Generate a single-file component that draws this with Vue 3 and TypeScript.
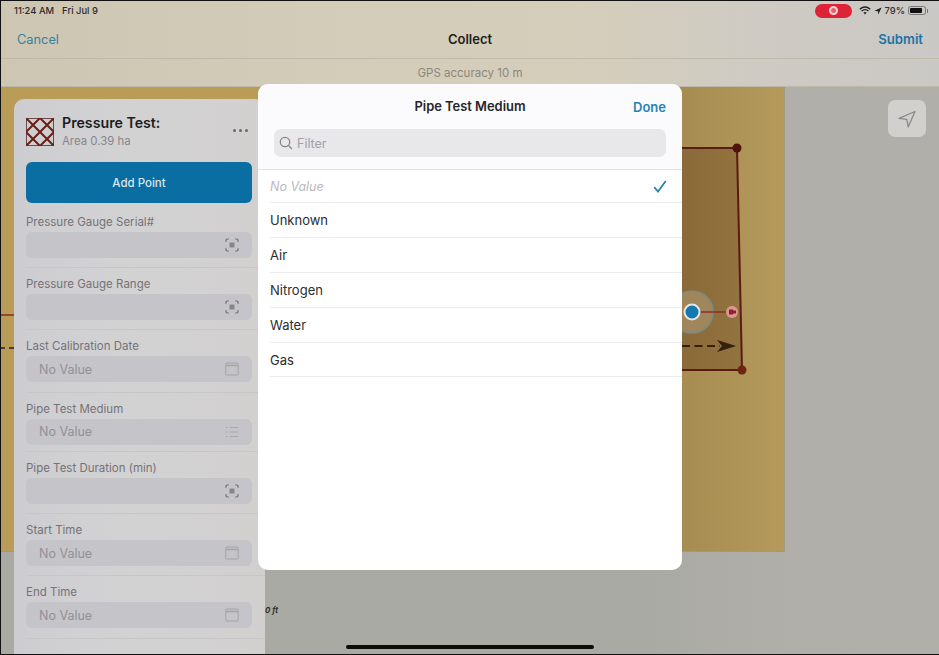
<script setup lang="ts">
type FieldIcon = 'scan' | 'calendar' | 'list';

const fields: { label: string; value: string; icon: FieldIcon; compact?: boolean }[] = [
  { label: 'Pressure Gauge Serial#', value: '', icon: 'scan' },
  { label: 'Pressure Gauge Range', value: '', icon: 'scan' },
  { label: 'Last Calibration Date', value: 'No Value', icon: 'calendar' },
  { label: 'Pipe Test Medium', value: 'No Value', icon: 'list', compact: true },
  { label: 'Pipe Test Duration (min)', value: '', icon: 'scan' },
  { label: 'Start Time', value: 'No Value', icon: 'calendar' },
  { label: 'End Time', value: 'No Value', icon: 'calendar' }
];

const options = ['Unknown', 'Air', 'Nitrogen', 'Water', 'Gas'];
</script>

<template>
  <div class="screen">
    <header class="top">
      <div class="status">
        <span class="time">11:24 AM</span>
        <span class="date">Fri Jul 9</span>
        <span class="status-right">
          <span class="rec"><span class="rec-dot"></span></span>
          <svg class="wifi" width="12" height="9" viewBox="0 0 12 9">
            <path d="M0.8 3.2C4 0.4 8 0.4 11.2 3.2M2.6 5C4.8 3.2 7.2 3.2 9.4 5" fill="none" stroke="#222" stroke-width="1.4" />
            <path d="M4.4 6.6C5.4 5.8 6.6 5.8 7.6 6.6L6 8.4Z" fill="#222" />
          </svg>
          <svg width="8" height="8" viewBox="0 0 8 8"><path d="M7.6 0.4L0.4 3.8L3.8 4.2L4.3 7.6Z" fill="#222" /></svg>
          <span class="pct">79%</span>
          <span class="battery"><span class="battery-fill"></span></span>
          <span class="battery-nub"></span>
        </span>
      </div>
      <nav class="nav">
        <span class="cancel">Cancel</span>
        <span class="nav-title">Collect</span>
        <span class="submit">Submit</span>
      </nav>
      <div class="gps">GPS accuracy 10 m</div>
    </header>

    <main class="map">
      <div class="parcel"></div>
      <svg class="sketch" width="939" height="568" viewBox="0 87 939 568">
        <defs>
          <linearGradient id="plot" x1="0" y1="0" x2="1" y2="0">
            <stop offset="0" stop-color="#8a6a38" />
            <stop offset="1" stop-color="#93733f" />
          </linearGradient>
        </defs>
        <path d="M682 148H737L742 370H682Z" fill="url(#plot)" />
        <path d="M682 148H737L742 370H682" fill="none" stroke="#5c1a14" stroke-width="2" />
        <path d="M0 315H14" stroke="#8c2a1c" stroke-width="1.5" />
        <path d="M0 348H14" stroke="#222" stroke-width="1.5" stroke-dasharray="5 4" />
        <circle cx="737" cy="148" r="4.5" fill="#4f120c" />
        <circle cx="742" cy="370" r="4.5" fill="#6e2410" />
        <circle cx="692" cy="312" r="21" fill="#a0865c" stroke="#7f8a80" stroke-width="1.5" />
        <path d="M696 312H732" stroke="#8c2f2a" stroke-width="1.5" />
        <circle cx="732" cy="312" r="6" fill="#d69a93" />
        <path d="M729 309.5H733V310.5H736V313.5H733V314.5H729Z" fill="#8e1f2b" />
        <circle cx="692" cy="312" r="7.5" fill="#1477ad" stroke="#e4e6e4" stroke-width="2" />
        <path d="M682 346H720" stroke="#33200e" stroke-width="2.2" stroke-dasharray="8 4.5" />
        <path d="M717 340L736 346L717 352L722 346Z" fill="#33200e" />
      </svg>
      <button class="locate">
        <svg width="20" height="20" viewBox="0 0 20 20">
          <path d="M18 2.5L2 9.3L9.8 10.4L11.2 18Z" fill="none" stroke="#8a8987" stroke-width="1.3" stroke-linejoin="round" />
        </svg>
      </button>
      <span class="scale">0 ft</span>

      <aside class="panel">
        <div class="panel-head">
          <svg class="swatch" width="28" height="28" viewBox="0 0 28 28">
            <rect x="0.5" y="0.5" width="27" height="27" fill="#cfcfd2" stroke="#6a4a45" />
            <path d="M0 0L28 28M28 0L0 28M0 14L14 0L28 14L14 28Z" fill="none" stroke="#6b1f18" stroke-width="2" />
          </svg>
          <div class="panel-text">
            <div class="panel-title">Pressure Test:</div>
            <div class="panel-sub">Area 0.39 ha</div>
          </div>
          <span class="dots"><i></i><i></i><i></i></span>
        </div>
        <button class="add">Add Point</button>
        <div v-for="f in fields" :key="f.label" class="field" :class="{ compact: f.compact }">
          <label>{{ f.label }}</label>
          <div class="input">
            <span class="value">{{ f.value }}</span>
            <svg v-if="f.icon === 'scan'" width="14" height="14" viewBox="0 0 14 14" fill="none" stroke="#6f6f75" stroke-width="1.2">
              <path d="M1 3.8V2.2Q1 1 2.2 1H3.8M10.2 1H11.8Q13 1 13 2.2V3.8M13 10.2V11.8Q13 13 11.8 13H10.2M3.8 13H2.2Q1 13 1 11.8V10.2" />
              <rect x="4.5" y="4.5" width="5" height="5" fill="#85858b" stroke="none" />
            </svg>
            <svg v-else-if="f.icon === 'calendar'" width="14" height="14" viewBox="0 0 14 14" fill="none" stroke="#a3a3a8" stroke-width="1">
              <rect x="0.8" y="1" width="12.4" height="12" rx="1" />
              <path d="M0.8 3.5H13.2" stroke-width="1.6" />
            </svg>
            <svg v-else width="14" height="14" viewBox="0 0 14 14" fill="none" stroke="#a8a8ad" stroke-width="1">
              <path d="M4.5 2.5H13.5M4.5 7H13.5M4.5 11.5H13.5M0.5 2.5H2.5M0.5 7H2.5M0.5 11.5H2.5" />
            </svg>
          </div>
        </div>
      </aside>
    </main>

    <section class="sheet">
      <div class="sheet-head">
        <span class="sheet-spacer"></span>
        <span class="sheet-title">Pipe Test Medium</span>
        <span class="done">Done</span>
      </div>
      <div class="filter">
        <svg width="14" height="14" viewBox="0 0 14 14" fill="none" stroke="#85858a" stroke-width="1.3">
          <circle cx="6" cy="6" r="4.7" />
          <path d="M9.5 9.5L13 13" />
        </svg>
        <span>Filter</span>
      </div>
      <ul class="list">
        <li class="row none">
          <span>No Value</span>
          <svg width="14" height="13" viewBox="0 0 14 13" fill="none" stroke="#2b82ad" stroke-width="1.8">
            <path d="M1.2 7.2L5 11.5L12.8 1" />
          </svg>
        </li>
        <li v-for="o in options" :key="o" class="row">{{ o }}</li>
      </ul>
    </section>

    <div class="home"></div>
  </div>
</template>

<style>
html,
body {
  margin: 0;
  background: #111;
}
</style>

<style scoped>
.screen {
  position: relative;
  width: 938px;
  height: 653px;
  margin: 1px 0 1px 1px;
  display: flex;
  flex-direction: column;
  overflow: hidden;
  font-family: Inter, "Liberation Sans", sans-serif;
  background: linear-gradient(90deg, #a9aaa4 0%, #a9aaa4 68%, #b0aea9 82%, #b1afaa 100%);
  color: #1c1c1e;
}

.top {
  background: linear-gradient(90deg, #cdc6b3 0%, #d3ccb8 35%, #d5cebb 62%, #cfcbc3 80%, #cac8c5 100%);
  flex: none;
}

.status {
  height: 19px;
  padding: 0 11px 0 13px;
  display: flex;
  align-items: center;
  gap: 8px;
  font-size: 9.4px;
  font-weight: 500;
  color: #2b2b2b;
}

.status-right {
  margin-left: auto;
  display: flex;
  align-items: center;
  gap: 3px;
}

.rec {
  width: 37px;
  height: 14px;
  border-radius: 7px;
  background: #de2336;
  display: flex;
  align-items: center;
  justify-content: center;
  margin-right: 4px;
}

.rec-dot {
  width: 5px;
  height: 5px;
  border-radius: 50%;
  background: #e9606c;
  border: 2px solid #f6d5d5;
}

.pct {
  color: #333;
  margin-right: 0;
}

.battery {
  width: 18px;
  height: 9px;
  border: 1px solid #77777a;
  border-radius: 2.5px;
  padding: 1px;
  box-sizing: border-box;
  display: flex;
}

.battery-fill {
  width: 85%;
  background: #111;
  border-radius: 1px;
}

.battery-nub {
  width: 1px;
  height: 4px;
  margin-left: -2px;
  background: #77777a;
}

.nav {
  height: 39px;
  padding: 0 16px;
  display: flex;
  align-items: center;
  justify-content: space-between;
  font-size: 13px;
  border-bottom: 1px solid #bfb9a9;
  box-sizing: border-box;
}

.cancel {
  color: #37829f;
  width: 60px;
  font-size: 12.8px;
}

.nav-title {
  font-weight: 600;
  color: #1d1d1b;
}

.submit {
  color: #1c76a3;
  font-weight: 600;
  width: 60px;
  text-align: right;
  font-size: 13.2px;
}

.gps {
  height: 28px;
  display: flex;
  align-items: center;
  justify-content: center;
  font-size: 11.5px;
  color: #8c877b;
  border-bottom: 1px solid #bdb8a8;
  box-sizing: border-box;
}

.map {
  position: relative;
  flex: 1;
}

.parcel {
  position: absolute;
  left: 0;
  top: 0;
  width: 784px;
  height: 465px;
  background: linear-gradient(90deg, #b89c58 0%, #b89c58 72%, #a68c50 87%, #b59a5c 100%);
  border-right: 1px solid #9c9a84;
  border-bottom: 1px solid #9c9a84;
  box-sizing: border-box;
}

.sketch {
  position: absolute;
  left: -1px;
  top: 0;
}

.locate {
  position: absolute;
  left: 887px;
  top: 13px;
  width: 38px;
  height: 37px;
  padding: 0;
  border: none;
  border-radius: 7px;
  background: #d2d0cd;
  display: flex;
  align-items: center;
  justify-content: center;
}

.scale {
  position: absolute;
  left: 264px;
  top: 518px;
  font-size: 8px;
  font-style: italic;
  font-weight: 600;
  color: #222;
}

.panel {
  position: absolute;
  left: 13px;
  top: 12px;
  width: 251px;
  bottom: 0;
  padding: 0 12px;
  box-sizing: border-box;
  border-radius: 10px 10px 0 0;
  background: linear-gradient(90deg, #cdccd0 0%, #d3d2d3 45%, #d2d0cf 100%);
}

.panel-head {
  height: 63px;
  display: flex;
  align-items: center;
  padding-top: 2px;
  box-sizing: border-box;
}

.swatch {
  margin-right: 8px;
  flex: none;
}

.panel-title {
  font-size: 14.2px;
  font-weight: 600;
  line-height: 17px;
  margin-bottom: 2px;
}

.panel-sub {
  font-size: 11.4px;
  line-height: 17px;
  color: #87878a;
}

.dots {
  margin-left: auto;
  display: flex;
  gap: 3px;
  margin-right: 5px;
  transform: translateY(-1px);
}

.dots i {
  width: 3px;
  height: 3px;
  border-radius: 50%;
  background: #6a6a6f;
}

.add {
  display: block;
  width: 226px;
  height: 41px;
  padding: 0;
  border: none;
  border-radius: 6px;
  background: #0a6ea3;
  color: #dbe7ee;
  font: 500 11.5px Inter, "Liberation Sans", sans-serif;
  margin-bottom: 3px;
}

.field {
  height: 62.2px;
  padding-top: 9px;
  box-sizing: border-box;
  border-bottom: 1px solid #c8c7c8;
  margin-right: -12px;
}

.field.compact {
  height: 59.4px;
}

.field label {
  display: block;
  font-size: 11.5px;
  line-height: 14px;
  color: #747378;
  height: 17px;
}

.input {
  width: 226px;
  height: 26px;
  border-radius: 6px;
  background: #c4c4c9;
  display: flex;
  align-items: center;
  justify-content: space-between;
  padding: 0 13px;
  box-sizing: border-box;
}

.value {
  font-size: 12.5px;
  color: #919197;
}

.sheet {
  position: absolute;
  left: 257px;
  top: 83px;
  width: 424px;
  height: 486px;
  border-radius: 10px;
  background: #fff;
  overflow: hidden;
}

.sheet-head {
  height: 45px;
  padding: 0 16px;
  display: flex;
  align-items: center;
  justify-content: space-between;
  background: #fbfafc;
}

.sheet-spacer {
  width: 33px;
}

.sheet-title {
  font-size: 12.9px;
  font-weight: 600;
  color: #26262a;
}

.done {
  color: #2585b1;
  font-size: 13px;
  font-weight: 600;
}

.filter {
  height: 40px;
  padding: 0 16px 12px;
  box-sizing: border-box;
  background: #fbfafc;
  display: flex;
  align-items: center;
  position: relative;
  color: #a2a2a7;
  font-size: 12.5px;
}

.filter::before {
  content: "";
  position: absolute;
  left: 16px;
  right: 16px;
  top: 0;
  height: 28px;
  border-radius: 7px;
  background: #e8e7ea;
}

.filter svg,
.filter span {
  position: relative;
}

.filter svg {
  margin: 0 4px 0 5px;
}

.list {
  list-style: none;
  margin: 0;
  padding: 0 0 0 12px;
  border-top: 1px solid #e2e1e4;
}

.row {
  height: 34.9px;
  box-sizing: border-box;
  padding-right: 15px;
  border-bottom: 1px solid #ececee;
  display: flex;
  align-items: center;
  justify-content: space-between;
  font-size: 13px;
  color: #2c2c2e;
}

.row.none {
  height: 33px;
  color: #b9b9be;
  font-style: italic;
  font-size: 12.5px;
}

.home {
  position: absolute;
  left: 345px;
  bottom: 5px;
  width: 248px;
  height: 4px;
  border-radius: 2px;
  background: #0c0c0c;
}
</style>
